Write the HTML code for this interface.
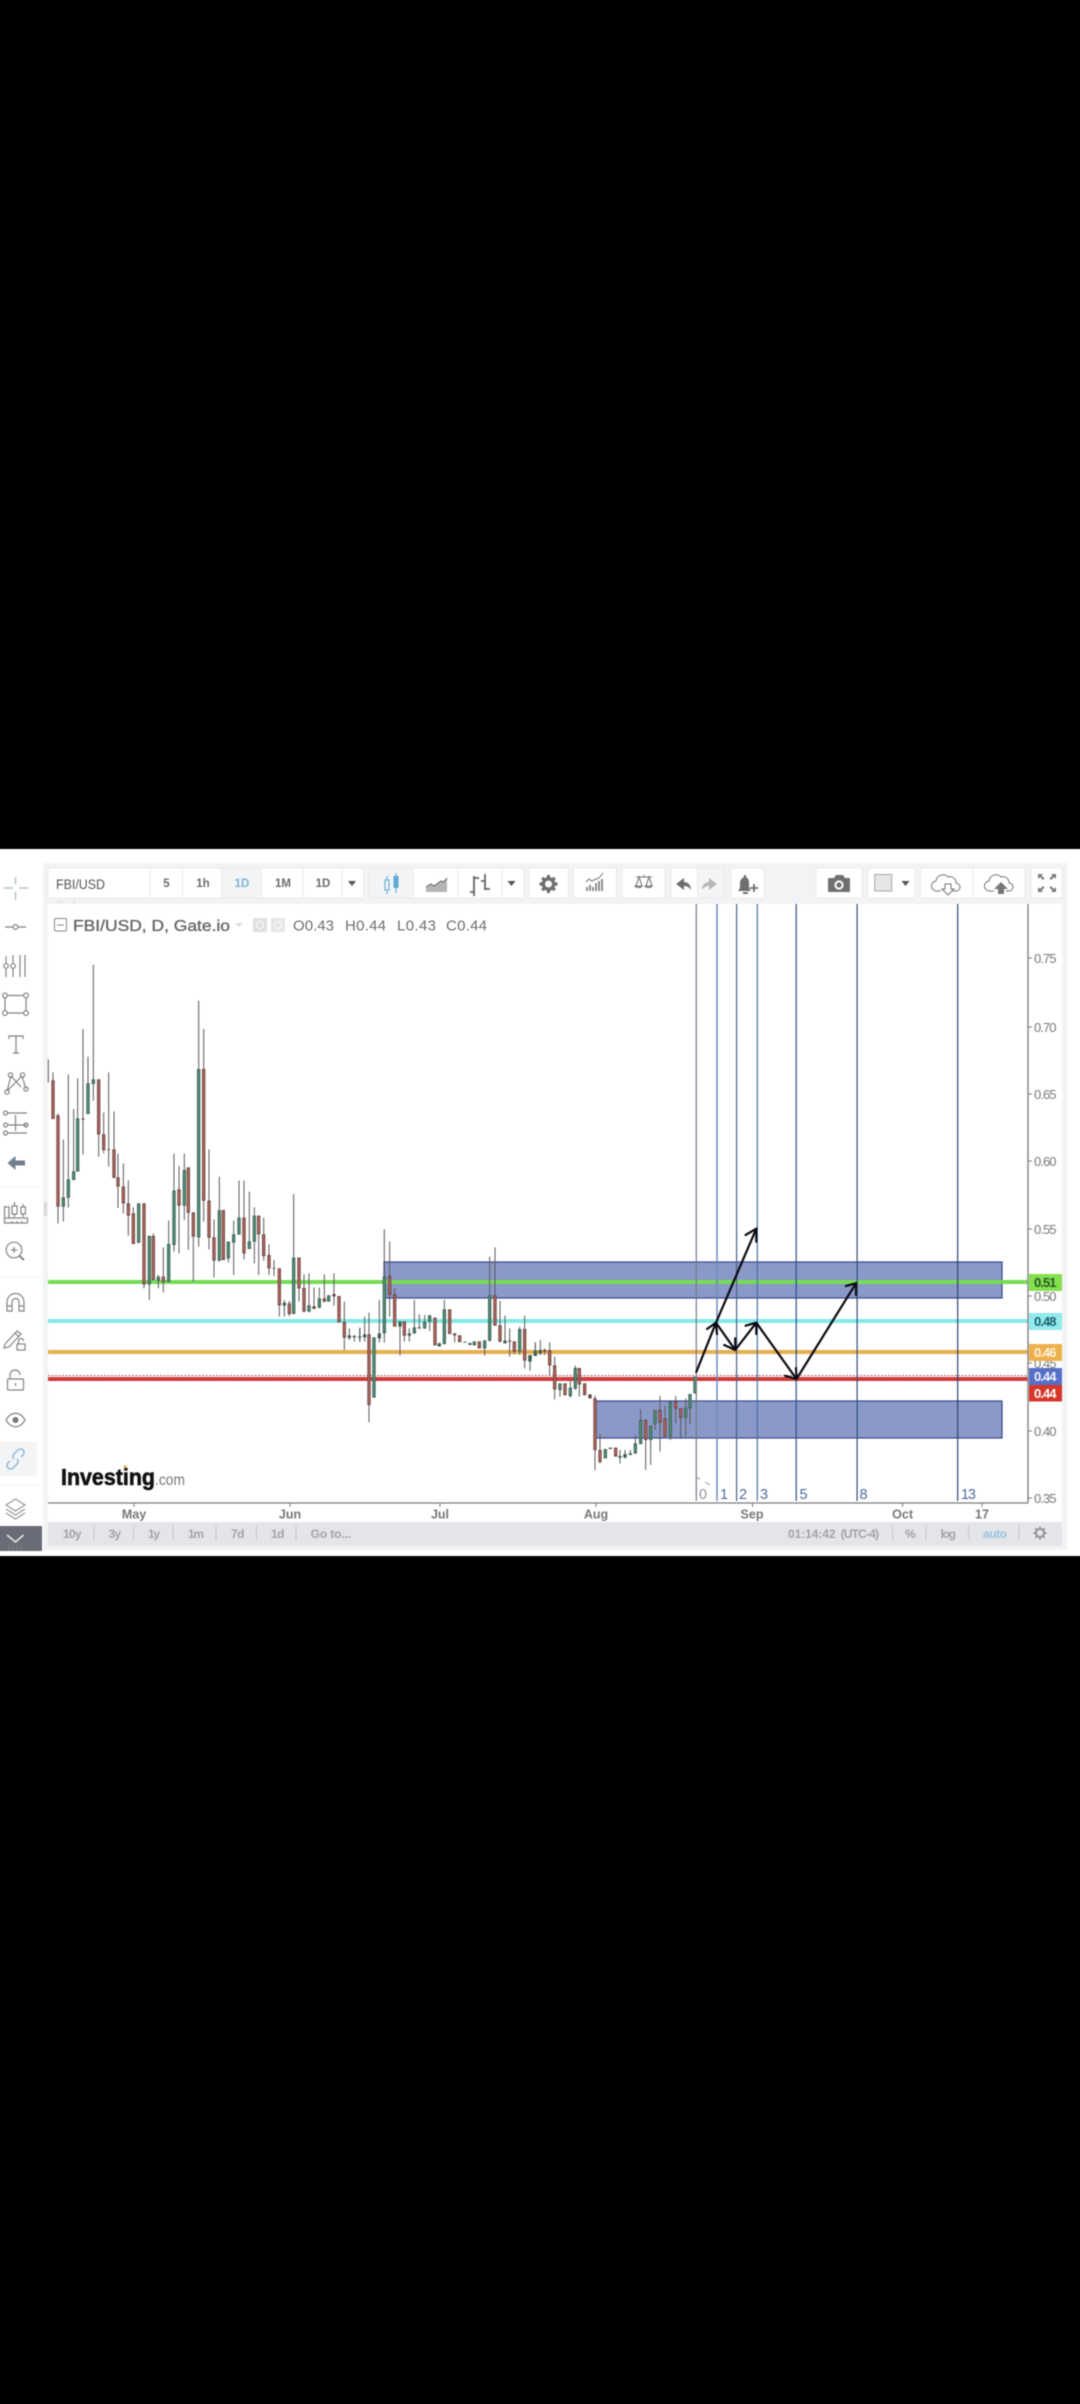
<!DOCTYPE html>
<html><head><meta charset="utf-8"><title>FBI/USD</title>
<style>
html,body{margin:0;padding:0;background:#000;width:1080px;height:2404px;overflow:hidden;position:relative}
svg{display:block;position:absolute;left:-10px;top:0;filter:blur(.5px)}
text{font-family:"Liberation Sans",sans-serif}
.ic{fill:none;stroke:#808488;stroke-width:1.2}
.t{fill:#777;font-size:12.5px;text-anchor:middle;font-weight:bold}
.b{fill:#a2a4aa;font-size:12px;font-weight:bold}
.w{fill:none;stroke:#5a5a5a;stroke-width:3}
.go{fill:none;stroke:#3f6054;stroke-width:10}
.gi{fill:none;stroke:#4d8a70;stroke-width:6}
.ro{fill:none;stroke:#664440;stroke-width:10}
.ri{fill:none;stroke:#a9625a;stroke-width:6}
</style></head>
<body>
<svg width="1100" height="2404" viewBox="-10 0 1100 2404" xmlns="http://www.w3.org/2000/svg">
<rect x="-10" width="1100" height="2404" fill="#000"/>
<rect x="-10" y="849" width="1100" height="707" fill="#fff"/>
<rect x="43" y="863" width="1024" height="687" fill="#f1f3f4"/>
<rect x="48" y="904" width="1014" height="642" fill="#fff"/>

<!-- toolbar buttons -->
<g fill="#fff" stroke="#e9ebed" stroke-width="1">
<rect x="48" y="868" width="102" height="30"/><rect x="150" y="868" width="32.5" height="30"/><rect x="182.5" y="868" width="39" height="30"/>
<rect x="221.5" y="868" width="40" height="30" fill="#f2f4f6"/><rect x="261.5" y="868" width="41.5" height="30"/><rect x="303" y="868" width="39" height="30"/><rect x="342" y="868" width="21.5" height="30"/>
<rect x="369" y="868" width="44" height="30" fill="#f2f4f6"/><rect x="413" y="868" width="45" height="30"/><rect x="458" y="868" width="44" height="30"/><rect x="502" y="868" width="22" height="30"/>
<rect x="529" y="868" width="39.5" height="30"/><rect x="573.5" y="868" width="43" height="30"/><rect x="622" y="868" width="43" height="30"/>
<rect x="671" y="868" width="26.5" height="30"/><rect x="697.5" y="868" width="26.5" height="30" fill="#f4f5f6"/><rect x="731" y="868" width="33" height="30"/>
<rect x="816" y="868" width="46" height="30"/><rect x="868" y="868" width="47" height="30"/><rect x="920.5" y="868" width="52.5" height="30"/><rect x="973" y="868" width="52" height="30"/><rect x="1031" y="868" width="31" height="30"/>
</g>
<text x="56" y="889" font-size="13.5" fill="#555" textLength="49" lengthAdjust="spacingAndGlyphs">FBI/USD</text>
<g font-size="11.5" font-weight="bold" fill="#6c6c6c" text-anchor="middle">
<text x="166.5" y="887">5</text><text x="203" y="887">1h</text><text x="242" y="887" fill="#7ab6d4">1D</text><text x="283" y="887">1M</text><text x="323" y="887">1D</text>
</g>
<path d="M348 881h8l-4 5z M507.5 881h8l-4 5z M901.5 881h8l-4 5z" fill="#555"/>
<!-- candle icon -->
<g fill="none" stroke="#6fb4d8" stroke-width="1.2"><rect x="385" y="880" width="4" height="10"/><path d="M387 876v4M387 890v4M396 873v20"/></g><rect x="393.5" y="876" width="5" height="12" fill="#5fa9d6"/>
<!-- area -->
<path d="M426 892v-5l5-3 3 2 7-5 3 1 3-4v14z" fill="#b5b5b5"/><path d="M426 887l5-3 3 2 7-5 3 1 3-4" fill="none" stroke="#777" stroke-width="1.2"/>
<!-- bars -->
<path d="M474 876v20M474 892h-4M474 878h5M485 874v16M485 881h-4M485 889h5" fill="none" stroke="#666" stroke-width="1.8"/>
<!-- gear -->
<g transform="translate(548.5 884)"><circle r="5.2" fill="none" stroke="#707070" stroke-width="3.4"/><path d="M-1.6-9h3.2v3h-3.2zM-1.6 6h3.2v3h-3.2zM-9-1.6h3v3.2h-3zM6-1.6h3v3.2h-3zM-7.4-5.2l2.2-2.2 2 2-2.2 2.2zM3.2 5.2l2.2-2.2 2 2-2.2 2.2zM5.2-7.4l2.2 2.2-2 2-2.2-2.2zM-5.2 7.4l-2.2-2.2 2-2 2.2 2.2z" fill="#707070"/></g>
<!-- indicators -->
<path d="M587 891v-4M590 891v-6M593 891v-4M596 891v-8M599 891v-10M602 891v-12" stroke="#777" stroke-width="1.6" fill="none"/><path d="M586 882l3-3 3 2 4-2 3-1 4-5" stroke="#777" stroke-width="1" fill="none"/>
<!-- scales -->
<g fill="none" stroke="#777" stroke-width="1.1"><path d="M636 877h16M644 875v2M639 877l-3 9h6zM649 877l-3 9h6z"/><path d="M635 886a4 3 0 0 0 7 0zM645 886a4 3 0 0 0 7 0z" fill="#ddd"/></g>
<!-- undo/redo -->
<path d="M676 884l8-6v4c4 0 7 3 7 8-2-3-4-4-7-4v4z" fill="#707070"/>
<path d="M717 884l-8-6v4c-4 0-7 3-7 8 2-3 4-4 7-4v4z" fill="#b8b8b8"/>
<!-- bell -->
<path d="M738 891c2-2 2-4 2-8 0-3 2-5 4-6v-2h2v2c2 1 3 3 3 6 0 4 0 6 2 8z" fill="#6f6f6f"/><path d="M743 892h5v2h-5z" fill="#6f6f6f"/><path d="M750 888h8M754 884v8" stroke="#6f6f6f" stroke-width="1.8"/>
<!-- camera -->
<path d="M829 878h5l2-3h7l2 3h4a1 1 0 0 1 1 1v12a1 1 0 0 1-1 1h-20a1 1 0 0 1-1-1v-12a1 1 0 0 1 1-1z" fill="#6f6f6f"/><circle cx="839" cy="885" r="4.6" fill="#fff"/><circle cx="839" cy="885" r="2.6" fill="#6f6f6f"/>
<!-- color -->
<rect x="874.7" y="874.5" width="17" height="16.5" fill="#e6e6e6" stroke="#a8a8a8"/>
<!-- clouds -->
<g fill="none" stroke="#777" stroke-width="1"><path d="M941 891h-4a5 5 0 0 1-1-10 7 7 0 0 1 12-4 6 6 0 0 1 8 6 4 4 0 0 1 0 8h-3"/><path d="M994 891h-4a5 5 0 0 1-1-10 7 7 0 0 1 12-4 6 6 0 0 1 8 6 4 4 0 0 1 0 8h-3"/><path d="M945 884h6v5h3l-6 6-6-6h3z"/></g>
<path d="M998 894v-5h-4l7-7 7 7h-4v5z" fill="#777"/>
<!-- fullscreen -->
<path d="M1038 874l5 0-1.5 1.5 3 3-1.5 1.5-3-3-2 2zM1056 874h-5l1.5 1.5-3 3 1.5 1.5 3-3 2 2zM1038 892h5l-1.5-1.5 3-3-1.5-1.5-3 3-2-2zM1056 892h-5l1.5-1.5-3-3 1.5-1.5 3 3 2-2z" fill="#7a7a7a"/>

<path d="M57 903l3-2 3 2M74 899v5" stroke="#ddd" fill="none"/>

<!-- left toolbar -->
<line x1="43" y1="1187" x2="0" y2="1187" stroke="#f1f2f3"/><line x1="43" y1="1277" x2="0" y2="1277" stroke="#f1f2f3"/><line x1="43" y1="1485" x2="0" y2="1485" stroke="#f1f2f3"/>
<rect x="-10" y="1442" width="47" height="34" fill="#f3f4f6"/>
<path d="M15.5 877v7M15.5 892v8M4 888h9M19 888h9" stroke="#a9bcc0" stroke-width="1.3" fill="none"/>
<g class="ic">
<path d="M5 927h8M18 927h8"/><circle cx="15.5" cy="927" r="2.4"/>
<path d="M6 956v8M6 969v8M13 955v8M13 968v9M20 955v22M25 955v22"/><circle cx="6" cy="966" r="2.3"/><circle cx="13" cy="966" r="2.3"/>
<path d="M7.5 995.5h16M26 998v12M23.5 1013h-16M5 1010v-12"/><circle cx="5" cy="995.5" r="2.4"/><circle cx="26" cy="995.5" r="2.4"/><circle cx="5" cy="1013" r="2.4"/><circle cx="26" cy="1013" r="2.4"/>
<path d="M9 1039v-3h14v3M16 1036v17M13 1053h6"/>
<path d="M7 1091l4-15M11 1076l10 11M7 1091l15-15M22 1076l4 13"/><circle cx="7" cy="1092" r="2.2"/><circle cx="10.5" cy="1075" r="2.2"/><circle cx="22.5" cy="1075" r="2.2"/><circle cx="26" cy="1089" r="2.2"/>
<path d="M8 1113h19M8 1125h19M8 1133h19M15.5 1115v16"/><circle cx="5.5" cy="1113" r="2"/><circle cx="5.5" cy="1125" r="2"/><circle cx="5.5" cy="1133" r="2"/><circle cx="26" cy="1125" r="2"/>
<path d="M4.5 1206v17h23M4.5 1218h23v5M9 1218v-11h-4.5M12 1223v-2M17 1223v-2M22 1223v-2"/><rect x="12" y="1206" width="5" height="8"/><rect x="21" y="1207" width="4.5" height="7"/><path d="M14.5 1202v4M14.5 1214v3M23 1204v3M23 1214v3"/>
<circle cx="14" cy="1250" r="7.8"/><path d="M11 1250h6M14 1247v6"/>
<path d="M19.5 1256l4.5 4" stroke-width="2"/>
<path d="M7 1311v-9a8.5 8.5 0 0 1 17 0v9h-5v-9a3 3 0 0 0-7 0v9zM7 1306h5M19 1306h5"/>
<path d="M5 1344l12-13 4 3-12 13-5 1zM15 1333l4 4"/><rect x="17" y="1344" width="8" height="6"/><path d="M18.5 1344v-3a2.5 2.5 0 0 1 5 0"/>
<rect x="7.5" y="1379" width="16" height="11" rx="1"/><path d="M10 1379v-4a5 5 0 0 1 10 0M15.5 1383v3"/>
<path d="M6 1420c5-9 14-9 19 0-5 9-14 9-19 0z"/>
<path d="M6 1505l9.5-6 9.5 6-9.5 6zM6 1509l9.5 6 9.5-6M6 1513l9.5 6 9.5-6" stroke="#999"/>
</g>
<circle cx="15.5" cy="1420" r="3" fill="#777"/>
<path d="M7.5 1163l8-7v4.5h9.5v5h-9.5v4.5z" fill="#717f8e"/>
<g fill="none" stroke="#8cb9d8" stroke-width="1.5"><path d="M10 1461l-2 2a3.5 3.5 0 0 0 5 5l4-4a3.5 3.5 0 0 0 0-5"/><path d="M21 1457l2-2a3.5 3.5 0 0 0-5-5l-4 4a3.5 3.5 0 0 0 0 5"/></g>
<rect x="-10" y="1526" width="52" height="25" fill="#696c76"/>
<path d="M7 1535l8.5 7 8-7" fill="none" stroke="#e8e8ea" stroke-width="1.5"/>
<path d="M9 1545v6M13 1545v6M17 1545v6M21 1545v6" stroke="#797c86"/>
<rect x="44" y="1202" width="3" height="14" rx="1.5" fill="#d8d8d8"/>

<!-- legend -->
<rect x="54.5" y="918.5" width="12" height="12.5" rx="1.5" fill="none" stroke="#888" stroke-width="1"/><path d="M57 925h7" stroke="#888"/>
<text x="73" y="931" font-size="15.5" fill="#666" stroke="#666" stroke-width=".35" textLength="157" lengthAdjust="spacingAndGlyphs">FBI/USD, D, Gate.io</text>
<path d="M235 923h8l-4 4z" fill="#ddd"/>
<rect x="253" y="918" width="14" height="14" fill="#e0e0e0"/><rect x="271" y="918" width="14" height="14" fill="#e6e6e6"/>
<circle cx="260" cy="925" r="3.5" fill="none" stroke="#f6f6f6" stroke-width="1.5"/><circle cx="278" cy="925" r="3.5" fill="none" stroke="#f6f6f6" stroke-width="1.5"/>
<g font-size="15" fill="#6b6f6d">
<text x="293" y="930.5" textLength="41">O0.43</text><text x="345" y="930.5" textLength="41">H0.44</text><text x="397" y="930.5" textLength="39">L0.43</text><text x="446" y="930.5" textLength="41">C0.44</text>
</g>

<!-- boxes -->
<rect x="384" y="1262" width="618" height="36" fill="#8b99c8" stroke="#39488a" stroke-width="1.2"/>
<rect x="596" y="1401" width="406" height="37" fill="#8b99c8" stroke="#39488a" stroke-width="1.2"/>

<!-- horizontal lines -->
<rect x="48" y="1280" width="980" height="4" fill="#74dc55"/>
<rect x="48" y="1319" width="980" height="4" fill="#86e9e6"/>
<rect x="48" y="1350" width="980" height="4" fill="#e8ae52"/>
<rect x="48" y="1377" width="980" height="4" fill="#cf3c3c"/>
<line x1="48" y1="1375.5" x2="1028" y2="1375.5" stroke="#b05a5a" stroke-width="1" stroke-dasharray="2 1.5"/>

<!-- candles -->
<g transform="translate(44 950) scale(.33333)">
<path class="w" d="M13 328V398M27 367V507M42 490V820M58 568V815M73 373V773M89 477V690M101 385V665M117 237V613M132 320V492M148 44V452M164 388V620M179 487V610M194 367V650M210 484V685M222 611V774M238 640V790M253 691V857M268 772V882M284 760V880M300 760V1015M316 856V1050M328 850V990M343 975V1015M358 892V1027M374 812V996M390 611V905M405 648V910M421 611V810M433 652V900M448 787V995M464 152V890M479 237V815M495 598V898M510 808V982M526 680V935M538 780V930"/>
<path class="go" d="M58 742V770M73 688V743M89 664V690M101 505V665M132 400V492M148 388V402M284 760V878M316 858V1003M343 980V992M374 882V996M390 722V885M421 660V767M464 357V862M526 781V932"/>
<path class="gi" d="M58 745V767M73 691V740M89 667V687M101 508V662M132 403V489M148 391V399M284 763V875M316 861V1000M343 983V989M374 885V993M390 725V882M421 663V764M464 360V859M526 784V929"/>
<path class="ro" d="M27 391V507M42 496V770M117 506V509M164 388V553M179 553V600M194 598V600M210 598V683M222 682V710M238 710V760M253 760V797M268 790V882M300 760V1003M328 858V990M358 980V996M405 718V767M433 652V788M448 787V860M479 357V752M495 752V863M510 862V932M538 780V930"/>
<path class="ri" d="M27 394V504M42 499V767M164 391V550M179 556V597M210 601V680M222 685V707M238 713V757M253 763V794M268 793V879M300 763V1000M328 861V987M358 983V993M405 721V764M433 655V785M448 790V857M479 360V749M495 755V860M510 865V929M538 783V927"/>
</g>
<g transform="translate(220 1000) scale(.33333)">
<path class="w" d="M25 725V787M41 662V825M57 542V704M72 542V778M88 575V747M103 622V790M116 647V825M131 653V782M147 733V825M162 780V828M178 805V950M193 900V950M208 903V948M221 582V942M237 773V905M252 823V937M267 820V937M282 862V928M298 863V925M313 823V907M326 885V905M342 820V917M357 888V967M373 905V1050M388 985V1020M403 1005V1025M419 985V1025"/>
<path class="go" d="M25 725V775M41 703V728M57 653V704M88 724V747M103 647V725M193 908V917M221 773V942M267 916V935M298 895V923M326 886V905M388 1006V1014M403 1008V1012M419 1009V1013"/>
<path class="gi" d="M25 728V772M41 706V725M57 656V701M88 727V744M103 650V722M221 776V939M267 919V932M298 898V920M326 889V902"/>
<path class="ro" d="M72 653V760M116 647V703M131 703V768M147 765V805M162 804V806M178 805V916M208 910V942M237 773V865M252 864V935M282 919V926M313 895V905M342 882V889M357 888V967M373 966V1013"/>
<path class="ri" d="M72 656V757M116 650V700M131 706V765M147 768V802M178 808V913M208 913V939M237 776V862M252 867V932M313 898V902M357 891V964M373 969V1010"/>
</g>
<g transform="translate(360 1220) scale(.33333)">
<path class="w" d="M0 323V365M14 290V365M27 278V607M42 352V533M58 240V368M73 27V368M89 64V290M104 205V320M120 304V407M133 304V365M148 325V365M163 240V342M178 283V327M194 285V327M209 285V333M225 293V376M238 368V380M253 240V373M269 268V342M284 340V367M299 345V367M374 361V407M389 110V365M405 82V317M420 243V367M435 287V370M449 325V410M463 364V403M479 320V405M494 287V445M510 405V452M526 367V407"/>
<path class="go" d="M14 343V352M42 352V533M58 340V355M73 170V340M120 304V320M148 340V347M163 322V340M194 305V325M209 286V305M238 370V379M253 268V372M315 365V368M330 369V375M343 364V376M374 361V385M389 226V362M435 362V370M479 327V395M510 405V422M526 396V405"/>
<path class="gi" d="M42 355V530M73 173V337M163 325V337M194 308V322M209 289V302M253 271V369M343 367V373M374 364V382M389 229V359M479 330V392M510 408V419"/>
<path class="ro" d="M27 343V555M89 168V225M104 223V320M133 304V347M178 322V325M225 293V376M269 268V342M284 340V346M299 346V366M358 364V385M405 226V317M420 316V365M449 362V365M463 364V395M494 327V422"/>
<path class="ri" d="M27 346V552M89 171V222M104 226V317M133 307V344M225 296V373M269 271V339M299 349V363M358 367V382M405 229V314M420 319V362M463 367V392M494 330V419"/>
</g>
<g transform="translate(530 1330) scale(.33333)">
<path class="w" d="M16 38V78M31 30V75M44 55V75M59 37V135M74 80V208M90 160V200M105 160V197M121 150V203M136 107V180M148 114V200M164 160V197M195 197V420M210 312V400M270 360V400M285 360V385M301 360V375M316 315V372M332 238V343M347 268V420M362 285V405M375 240V300M390 198V365M405 228V320M421 215V330M437 198V280M452 235V323M467 205V320M480 192V282M495 140V190"/>
<path class="go" d="M0 75V95M16 62V78M31 60V70M90 160V180M121 173V198M136 114V176M226 357V385M270 378V383M285 372V383M301 370V375M316 340V370M332 270V342M362 288V330M375 240V283M421 215V320M467 233V263M480 192V235M495 140V190"/>
<path class="gi" d="M90 163V177M121 176V195M136 117V173M226 360V382M316 343V367M332 273V339M362 291V327M375 243V280M421 218V317M467 236V260M480 195V232M495 143V187"/>
<path class="ro" d="M44 60V65M59 60V106M74 106V178M105 160V195M148 114V163M164 160V195M180 193V205M195 205V360M210 360V396M241 353V357M257 353V380M347 270V330M390 240V278M405 266V320M437 215V236M452 235V263"/>
<path class="ri" d="M59 63V103M74 109V175M105 163V192M148 117V160M164 163V192M195 208V357M210 363V393M257 356V377M347 273V327M390 243V275M405 269V317M437 218V233M452 238V260"/>
</g>

<!-- fib lines -->
<g stroke-width="1.2">
<line x1="696.3" y1="904" x2="696.3" y2="1501" stroke="#727a88"/>
<line x1="717" y1="904" x2="717" y2="1501" stroke="#6f8abb" stroke-width="1.5"/>
<line x1="736.6" y1="904" x2="736.6" y2="1501" stroke="#46608c"/>
<line x1="757.3" y1="904" x2="757.3" y2="1501" stroke="#4d6fa4"/>
<line x1="796.2" y1="904" x2="796.2" y2="1501" stroke="#2f4f8c"/>
<line x1="857.1" y1="904" x2="857.1" y2="1501" stroke="#33507f"/>
<line x1="957.7" y1="904" x2="957.7" y2="1501" stroke="#2f4470"/>
</g>
<path d="M696 1477l4 2M705 1482l5 3" stroke="#999" fill="none"/>
<g font-size="14.5" fill="#4e6c9e">
<text x="699" y="1499" fill="#8c9096">0</text><text x="720" y="1499">1</text><text x="739" y="1499">2</text><text x="760" y="1499">3</text><text x="799.5" y="1499">5</text><text x="859.5" y="1499">8</text><text x="961" y="1499" textLength="15">13</text>
</g>

<!-- arrows -->
<g fill="none" stroke="#0b0b12" stroke-width="2.2" stroke-linecap="round" stroke-linejoin="round">
<path d="M696.3 1372L716 1322.7L735.2 1350L756.3 1322.7L796.5 1379L856 1283.3"/>
<path d="M716 1322.7L756.3 1228.7"/>
<path d="M745.6 1235L756.3 1228.7L756.3 1241.7M707 1329L716 1322.7L717 1334M724.2 1345L735.2 1350L735.2 1338.3M745.6 1325.7L756.3 1322.7L756.3 1334M785 1375.7L796.5 1379L796 1368M845.8 1286L856 1283.3L856 1295"/>
</g>

<!-- axes -->
<line x1="1028" y1="904" x2="1028" y2="1503" stroke="#8a8a8a" stroke-width="1.5"/>
<line x1="48" y1="1503" x2="1028" y2="1503" stroke="#7d7d7d" stroke-width="1.2"/>
<path d="M134 1503v4M290 1503v4M440 1503v4M596 1503v4M752.5 1503v4M902.6 1503v4M982 1503v4" stroke="#7d7d7d"/>
<path d="M1028 958h4M1028 1027h4M1028 1094h4M1028 1161h4M1028 1229h4M1028 1296h4M1028 1363h4M1028 1431h4M1028 1498h4" stroke="#7d7d7d"/>
<g font-size="13" fill="#777">
<text x="1034" y="963" textLength="22.5">0.75</text><text x="1034" y="1032" textLength="22.5">0.70</text><text x="1034" y="1099" textLength="22.5">0.65</text><text x="1034" y="1166" textLength="22.5">0.60</text><text x="1034" y="1234" textLength="22.5">0.55</text><text x="1034" y="1301" textLength="22.5">0.50</text><text x="1034" y="1368" textLength="22.5">0.45</text><text x="1034" y="1436" textLength="22.5">0.40</text><text x="1034" y="1503" textLength="22.5">0.35</text>
</g>
<rect x="1029" y="1274" width="33" height="17" fill="#84e14c"/>
<rect x="1029" y="1313" width="33" height="17" fill="#92eaeb"/>
<rect x="1029" y="1344" width="33" height="17" fill="#edb04c"/>
<rect x="1029" y="1368" width="33" height="17" fill="#5670c8"/>
<rect x="1029" y="1385" width="33" height="16.5" fill="#d7362b"/>
<g font-size="13" font-weight="bold">
<text x="1034" y="1287" textLength="22.5" fill="#26582c">0.51</text><text x="1034" y="1326" textLength="22.5" fill="#1e6272">0.48</text><text x="1034" y="1357" textLength="22.5" fill="#fdf3df">0.46</text><text x="1034" y="1381" textLength="22.5" fill="#f2f4ff">0.44</text><text x="1034" y="1398" textLength="22.5" fill="#fff">0.44</text>
</g>
<g class="t"><text x="134" y="1518.5">May</text><text x="290" y="1518.5">Jun</text><text x="440" y="1518.5">Jul</text><text x="596" y="1518.5">Aug</text><text x="752" y="1518.5">Sep</text><text x="902.6" y="1518.5">Oct</text><text x="982" y="1518.5">17</text></g>

<!-- logo -->
<text x="61" y="1485" font-size="23" font-weight="bold" fill="#111" stroke="#111" stroke-width=".6" textLength="94" lengthAdjust="spacingAndGlyphs">Investing</text>
<circle cx="125" cy="1467" r="1.5" fill="#e9a23a"/>
<text x="155" y="1485" font-size="16" fill="#777" textLength="30" lengthAdjust="spacingAndGlyphs">.com</text>

<!-- bottom bar -->
<rect x="48" y="1522" width="1014" height="24" fill="#e4e5e8"/>
<text class="b" x="63" y="1538" textLength="18.5">10y</text><text class="b" x="108.5" y="1538" textLength="12.5">3y</text><text class="b" x="148" y="1538" textLength="12">1y</text><text class="b" x="188" y="1538" textLength="16">1m</text><text class="b" x="231" y="1538" textLength="13.5">7d</text><text class="b" x="271" y="1538" textLength="13.5">1d</text><text class="b" x="310.6" y="1538" textLength="40.5">Go to...</text>
<path d="M94 1526v14M133.6 1526v14M173 1526v14M216 1526v14M256.5 1526v14M296 1526v14M892.6 1526v14M926 1526v14M968.7 1526v14M1019 1526v14" stroke="#c4c5c9"/>
<text class="b" x="788" y="1538" textLength="47.5">01:14:42</text><text class="b" x="840.6" y="1538" textLength="38.5" font-weight="normal">(UTC-4)</text><text class="b" x="905" y="1538" textLength="9">%</text><text class="b" x="940.5" y="1538" textLength="15.5">log</text><text class="b" x="983" y="1538" textLength="24" style="fill:#94c3e2">auto</text>
<g transform="translate(1040 1533)"><circle r="4" fill="none" stroke="#8f9095" stroke-width="1.8"/><path d="M0-6.5v2.5M0 4v2.5M-6.5 0h2.5M4 0h2.5M-4.6-4.6l1.8 1.8M2.8 2.8l1.8 1.8M4.6-4.6l-1.8 1.8M-2.8 2.8l-1.8 1.8" stroke="#8f9095" stroke-width="1.8"/></g>
</svg>
</body></html>
